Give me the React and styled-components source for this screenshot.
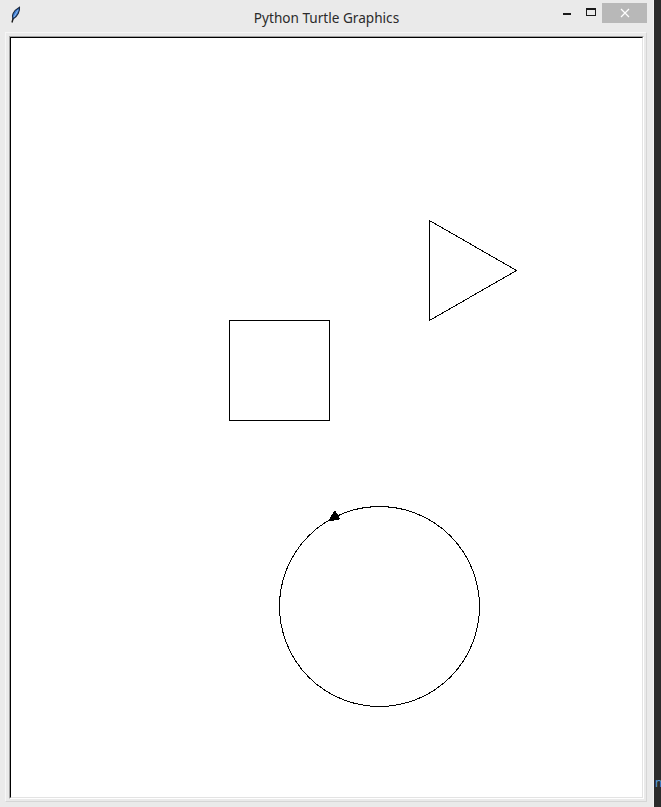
import React from "react";
import styled, { createGlobalStyle } from "styled-components";

const Global = createGlobalStyle`
  html, body { margin: 0; padding: 0; background: #2b2b2b; }
  body { width: 661px; height: 807px; overflow: hidden; font-family: "Noto Sans", "Liberation Sans", sans-serif; }
`;

const Screen = styled.div`
  display: flex;
  width: 661px;
  height: 807px;
`;

const Window = styled.div`
  width: 654px;
  height: 807px;
  flex-shrink: 0;
  background: #eaeaea;
  display: flex;
  flex-direction: column;
  box-sizing: border-box;
  border-right: 1px solid #f4f4f4;
`;

const TitleBar = styled.div`
  height: 31px;
  display: grid;
  grid-template-columns: 1fr auto 1fr;
  align-items: center;
  flex-shrink: 0;
`;

const AppIcon = styled.div`
  padding-left: 9px;
  display: flex;
  align-items: center;
  height: 100%;
  padding-bottom: 2px;
  box-sizing: border-box;
`;

const Title = styled.div`
  font-size: 13.6px;
  color: #2a2a2a;
  margin-top: 3px;
`;

const Controls = styled.div`
  display: flex;
  justify-content: flex-end;
  align-items: flex-start;
  height: 100%;
  padding-top: 3px;
  padding-right: 6px;
  box-sizing: border-box;
`;

const CtlButton = styled.div`
  width: ${(p) => p.w}px;
  height: 20px;
  display: flex;
  align-items: center;
  justify-content: center;
  background: ${(p) => (p.close ? "#b8b8b8" : "transparent")};
`;

const Body = styled.div`
  flex: 1;
  min-height: 0;
  padding: 1px 6px 5px 5px;
  display: flex;
  box-sizing: border-box;
`;

const OuterFrame = styled.div`
  flex: 1;
  min-width: 0;
  min-height: 0;
  display: flex;
  border-style: solid;
  border-width: 1px;
  border-color: #f6f6f6 #d6d6d6 #d6d6d6 #f6f6f6;
  padding: 3px 2px 2px 3px;
`;

const CanvasWell = styled.div`
  flex: 1;
  min-width: 0;
  min-height: 0;
  display: flex;
  border-style: solid;
  border-width: 1px;
  border-color: #a0a0a0 #ffffff #ffffff #a0a0a0;
`;

const CanvasInner = styled.div`
  flex: 1;
  min-width: 0;
  min-height: 0;
  border-style: solid;
  border-width: 1px;
  border-color: #000000 #e3e3e3 #e3e3e3 #000000;
  background: #ffffff;
  overflow: hidden;
`;

const Strip = styled.div`
  flex: 1;
  background: #2b2b2b;
  display: flex;
  flex-direction: column;
  justify-content: flex-end;
  padding-bottom: 19px;
  overflow: hidden;
`;

const StripGlyph = styled.span`
  font-size: 12px;
  color: #5b9bd5;
  line-height: 10px;
  margin-left: 1px;
`;

function Feather() {
  return (
    <svg width="12" height="18" viewBox="0 0 12 18">
      <path d="M3 16.5 L4.2 12" stroke="#1b1b1b" strokeWidth="1.4" fill="none" />
      <path
        d="M4 13 C2.3 10 3.8 5 10.5 1.2 C11 5 8.8 10 4 13 Z"
        fill="#3d7fd6"
        stroke="#1c2a40"
        strokeWidth="1.1"
      />
      <path d="M5 11 L9 4" stroke="#a7c9f2" strokeWidth="0.8" />
    </svg>
  );
}

function Minimize() {
  return (
    <svg width="10" height="10" viewBox="0 0 10 10">
      <rect x="1" y="5" width="8" height="2" fill="#1a1a1a" />
    </svg>
  );
}

function Maximize() {
  return (
    <svg width="12" height="12" viewBox="0 0 12 12" shapeRendering="crispEdges">
      <rect x="1.5" y="1.5" width="9" height="7" fill="none" stroke="#1a1a1a" strokeWidth="1" />
      <rect x="1" y="1" width="10" height="2" fill="#1a1a1a" />
    </svg>
  );
}

function Close() {
  return (
    <svg width="10" height="10" viewBox="0 0 10 10">
      <path d="M1 1 L9 9 M9 1 L1 9" stroke="#ffffff" strokeWidth="1.2" />
    </svg>
  );
}

// Turtle drawing; coordinates given in page space, shifted by the canvas origin (11, 38).
function TurtleDrawing() {
  return (
    <svg width="631" height="759" style={{ display: "block" }} shapeRendering="crispEdges">
      <g transform="translate(-11,-38)" fill="none" stroke="#000" strokeWidth="1">
        <rect x="229.5" y="320.5" width="100" height="100" />
        <polygon points="429.5,220.5 516.5,270.5 429.5,320.5" />
        <circle cx="379.5" cy="606.5" r="100" />
        <polygon points="335,511 328.5,521 339.5,519" fill="#000" stroke="#000" />
      </g>
    </svg>
  );
}

export default function App() {
  return (
    <>
      <Global />
      <Screen>
        <Window>
          <TitleBar>
            <AppIcon>
              <Feather />
            </AppIcon>
            <Title>Python Turtle Graphics</Title>
            <Controls>
              <CtlButton w={26}>
                <Minimize />
              </CtlButton>
              <CtlButton w={22}>
                <Maximize />
              </CtlButton>
              <CtlButton w={45} close>
                <Close />
              </CtlButton>
            </Controls>
          </TitleBar>
          <Body>
            <OuterFrame>
              <CanvasWell>
                <CanvasInner>
                  <TurtleDrawing />
                </CanvasInner>
              </CanvasWell>
            </OuterFrame>
          </Body>
        </Window>
        <Strip>
          <StripGlyph>n</StripGlyph>
        </Strip>
      </Screen>
    </>
  );
}
